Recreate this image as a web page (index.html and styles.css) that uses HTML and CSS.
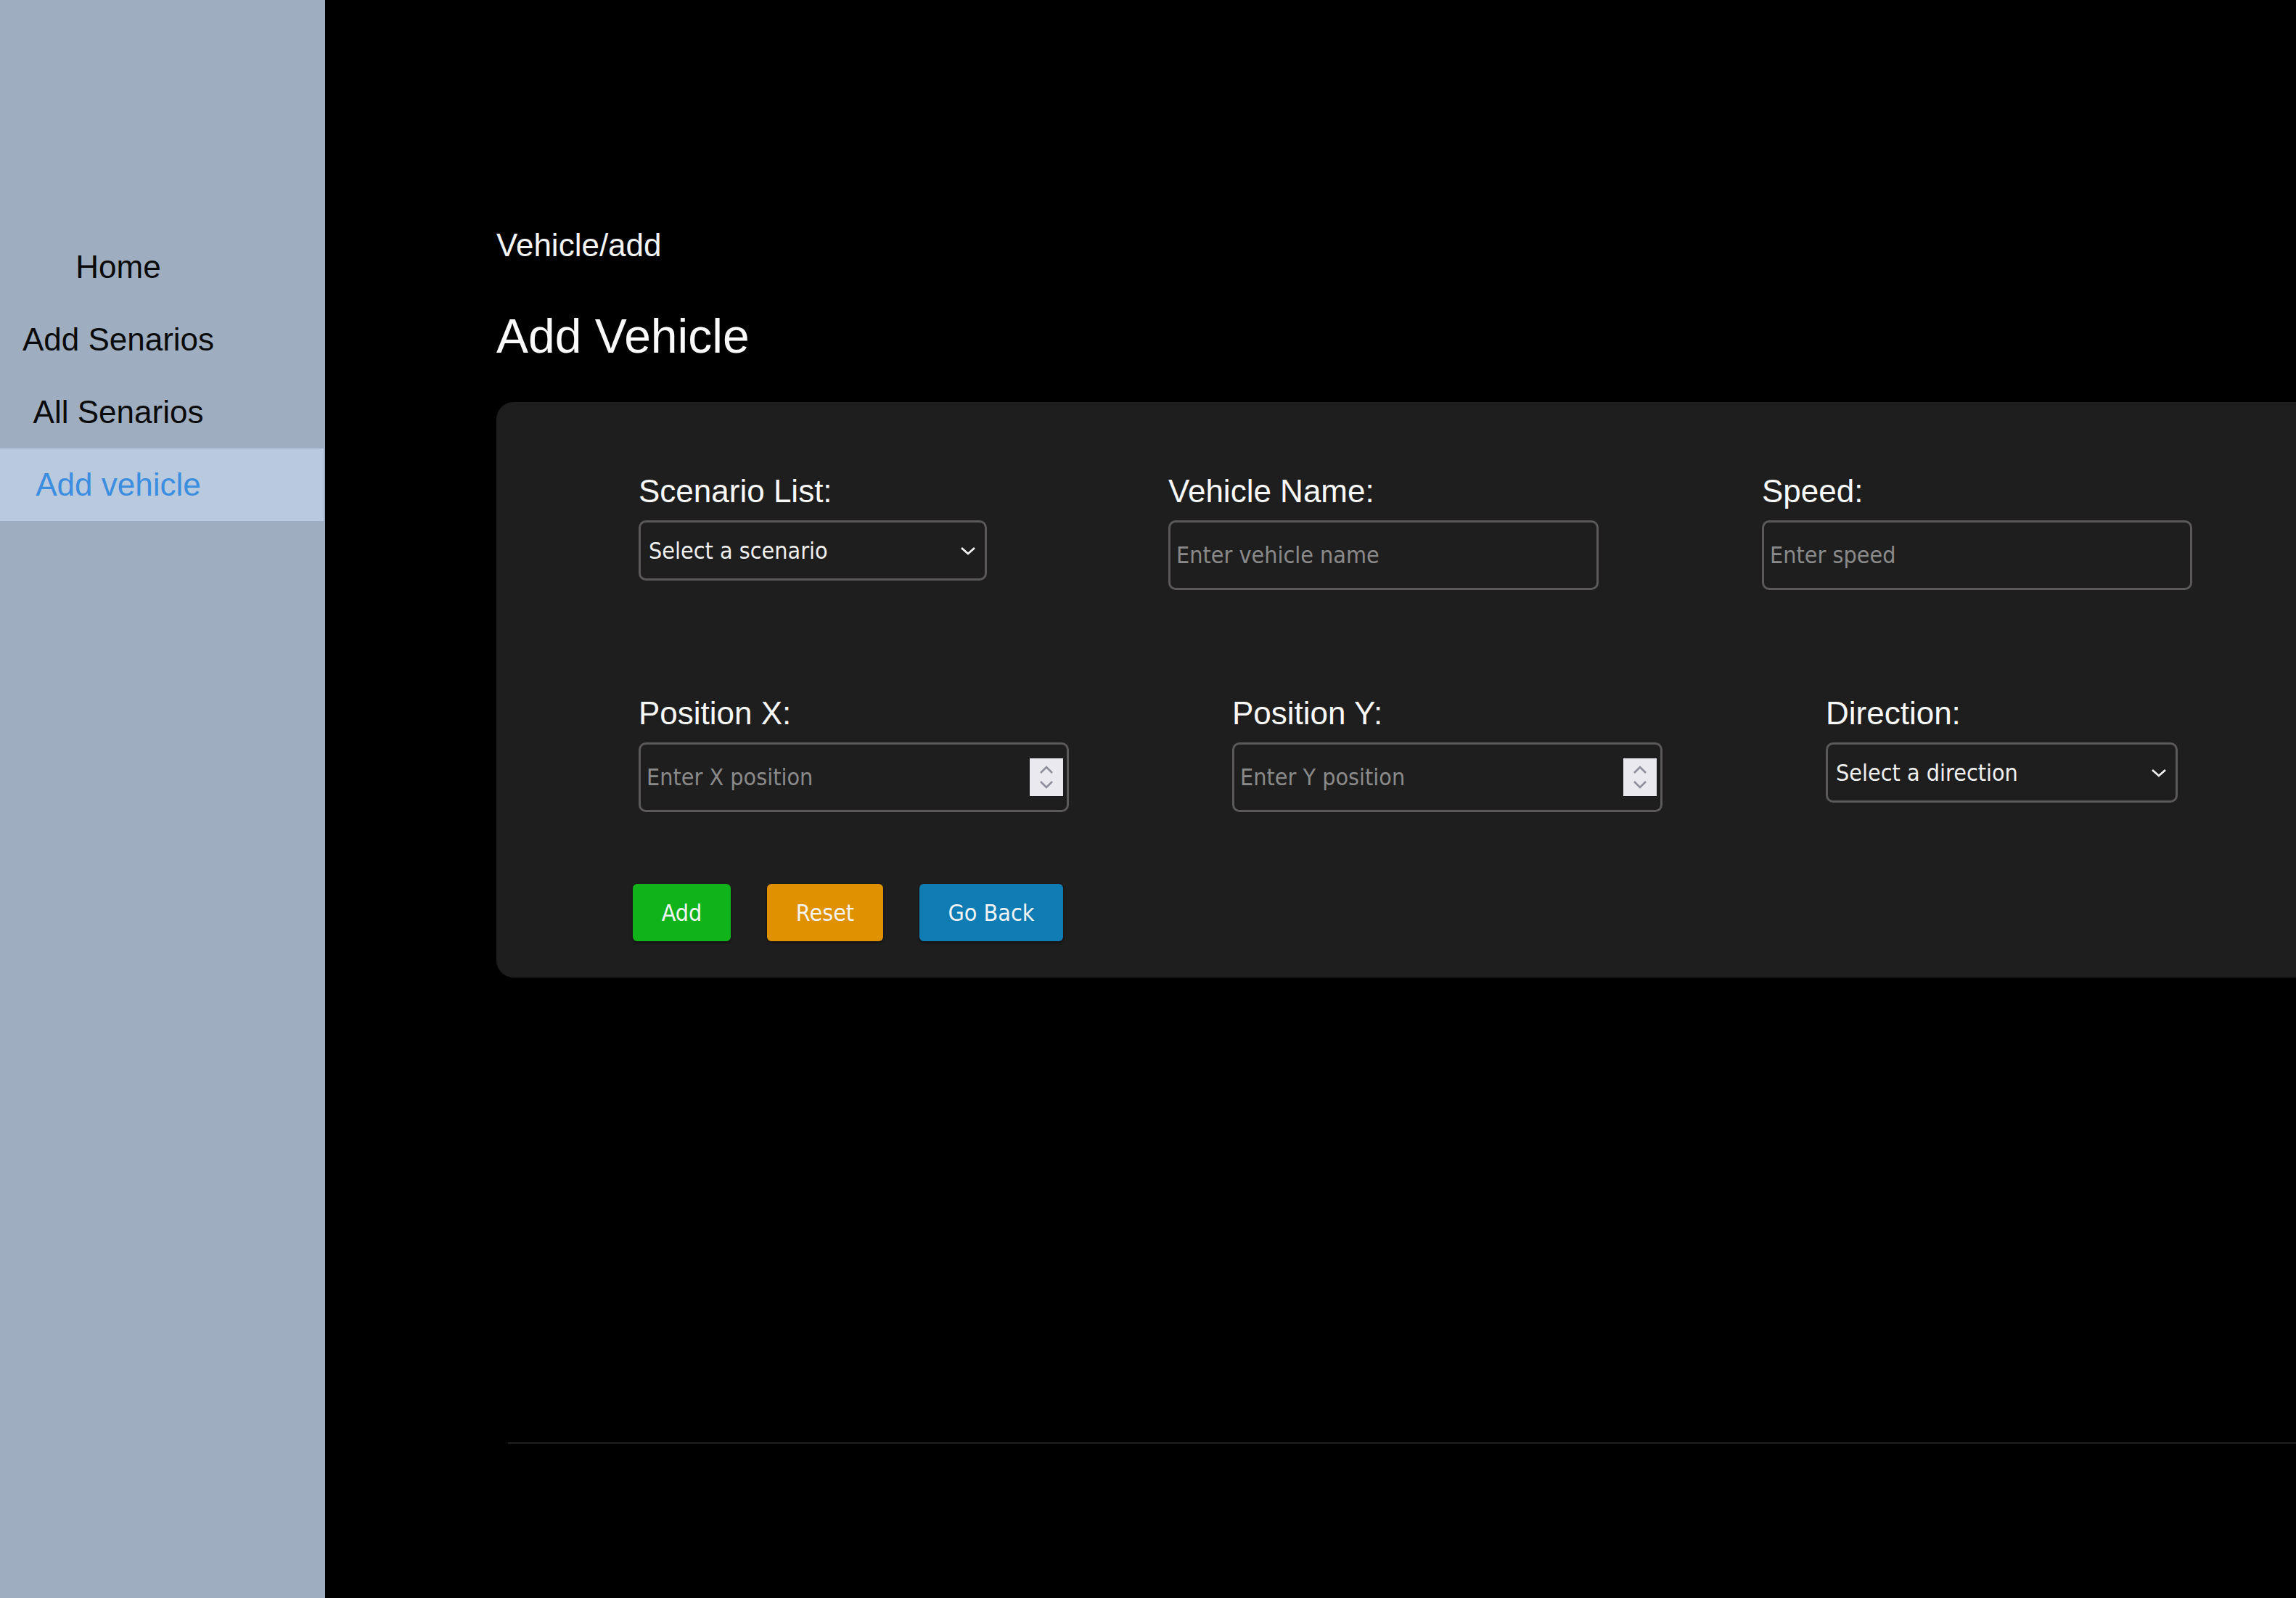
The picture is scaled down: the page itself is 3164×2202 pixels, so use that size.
FILE: index.html
```html
<!DOCTYPE html>
<html lang="en">
<head>
<meta charset="utf-8">
<title>Add Vehicle</title>
<link rel="stylesheet" href="styles.css">
</head>
<body>
<div class="layout">
  <aside class="sidebar">
    <nav class="nav">
      <a class="nav-item">Home</a>
      <a class="nav-item">Add Senarios</a>
      <a class="nav-item">All Senarios</a>
      <a class="nav-item active">Add vehicle</a>
    </nav>
  </aside>
  <main class="main">
    <div class="breadcrumb">Vehicle/add</div>
    <h1 class="title">Add Vehicle</h1>
    <section class="card">
      <div class="row row-top">
        <div class="field field-scenario">
          <label class="label">Scenario List:</label>
          <div class="select-wrap select-scenario">
            <select class="select"><option>Select a scenario</option></select>
            <svg class="chevron" viewBox="0 0 24 14" width="24" height="14"><path d="M3 3 L12 11 L21 3" fill="none" stroke="#f0f0f0" stroke-width="2.8"/></svg>
          </div>
        </div>
        <div class="field">
          <label class="label">Vehicle Name:</label>
          <input class="input" type="text" placeholder="Enter vehicle name">
        </div>
        <div class="field">
          <label class="label">Speed:</label>
          <input class="input" type="text" placeholder="Enter speed">
        </div>
      </div>
      <div class="row row-bottom">
        <div class="field">
          <label class="label">Position X:</label>
          <div class="number-wrap">
            <input class="input" type="number" placeholder="Enter X position">
            <span class="spinner"><svg viewBox="0 0 46 52" width="46" height="52"><path d="M15 20 L23 12 L31 20" fill="none" stroke="#8d8d9c" stroke-width="2.6"/><path d="M15 32 L23 40 L31 32" fill="none" stroke="#8d8d9c" stroke-width="2.6"/></svg></span>
          </div>
        </div>
        <div class="field">
          <label class="label">Position Y:</label>
          <div class="number-wrap">
            <input class="input" type="number" placeholder="Enter Y position">
            <span class="spinner"><svg viewBox="0 0 46 52" width="46" height="52"><path d="M15 20 L23 12 L31 20" fill="none" stroke="#8d8d9c" stroke-width="2.6"/><path d="M15 32 L23 40 L31 32" fill="none" stroke="#8d8d9c" stroke-width="2.6"/></svg></span>
          </div>
        </div>
        <div class="field">
          <label class="label">Direction:</label>
          <div class="select-wrap select-direction">
            <select class="select"><option>Select a direction</option></select>
            <svg class="chevron" viewBox="0 0 24 14" width="24" height="14"><path d="M3 3 L12 11 L21 3" fill="none" stroke="#f0f0f0" stroke-width="2.8"/></svg>
          </div>
        </div>
      </div>
      <div class="actions">
        <button class="btn btn-add" type="button">Add</button>
        <button class="btn btn-reset" type="button">Reset</button>
        <button class="btn btn-back" type="button">Go Back</button>
      </div>
    </section>
    <div class="footer-line"></div>
  </main>
</div>
</body>
</html>
```
FILE: styles.css
```css
* { box-sizing: border-box; }

html, body {
  margin: 0;
  padding: 0;
  width: 3164px;
  height: 2202px;
  overflow: hidden;
  background: #000;
  font-family: "Liberation Sans", Arial, sans-serif;
}

.layout {
  display: flex;
  width: 3164px;
  height: 2202px;
}

.sidebar {
  width: 448px;
  flex: 0 0 448px;
  height: 100%;
  background: #9eaec0;
  padding-top: 318px;
}

.nav {
  display: flex;
  flex-direction: column;
}

.nav-item {
  display: block;
  height: 100px;
  line-height: 100px;
  padding-right: 120px;
  text-align: center;
  font-size: 44px;
  color: #0a0a0a;
  margin-right: 2px;
}

.nav-item.active {
  background: #b9c9de;
  color: #3b8de0;
}

.main {
  flex: 1;
  min-width: 0;
  padding-left: 236px;
  padding-top: 312px;
  overflow: hidden;
}

.breadcrumb {
  font-size: 44px;
  line-height: 52px;
  color: #f4f4f4;
}

.title {
  margin: 61px 0 0 0;
  font-size: 66px;
  font-weight: normal;
  line-height: 76px;
  color: #fafafa;
}

.card {
  margin-top: 53px;
  width: 2700px;
  height: 793px;
  background: #1f1e1f;
  border-radius: 24px;
  padding: 98px 0 0 196px;
}

.row {
  display: flex;
  align-items: flex-start;
  gap: 225px;
}

.row-bottom {
  margin-top: 145px;
}

.field {
  display: flex;
  flex-direction: column;
  width: 593px;
}

.field-scenario {
  width: 505px;
}

.label {
  font-size: 44px;
  line-height: 50px;
  color: #f8f8f8;
  margin-bottom: 15px;
}

.input,
.select {
  font-family: "DejaVu Sans Condensed", "DejaVu Sans", sans-serif;
  font-stretch: condensed;
  font-size: 32px;
  background: transparent;
  border: 3px solid #5b5959;
  border-radius: 10px;
  outline: none;
  margin: 0;
}

.input {
  width: 593px;
  height: 96px;
  padding: 0 8px;
  color: #e6e6e6;
}

.input::placeholder {
  color: #8a8a8a;
}

.input[type=number] {
  -moz-appearance: textfield;
  appearance: textfield;
}

.input[type=number]::-webkit-inner-spin-button,
.input[type=number]::-webkit-outer-spin-button {
  -webkit-appearance: none;
  margin: 0;
}

.number-wrap {
  position: relative;
  width: 593px;
}

.spinner {
  position: absolute;
  right: 8px;
  top: 22px;
  width: 46px;
  height: 52px;
  background: #e9e9ef;
  display: block;
}

.spinner svg {
  display: block;
}

.select-wrap {
  position: relative;
}

.select-scenario { width: 480px; }
.select-direction { width: 485px; }

.select {
  -webkit-appearance: none;
  appearance: none;
  width: 100%;
  height: 83px;
  padding: 0 40px 0 11px;
  color: #f0f0f0;
}

.chevron {
  position: absolute;
  right: 14px;
  top: 35px;
  pointer-events: none;
}

.actions {
  display: flex;
  gap: 50px;
  margin-top: 99px;
  margin-left: -8px;
}

.btn {
  height: 79px;
  padding: 0;
  border: none;
  border-radius: 6px;
  font-family: "DejaVu Sans Condensed", "DejaVu Sans", sans-serif;
  font-stretch: condensed;
  font-size: 32px;
  color: #f4f4f4;
  box-shadow: 0 2px 3px rgba(0,0,0,0.5);
}

.btn-add { background: #10b31a; width: 135px; }
.btn-reset { background: #e09100; width: 160px; }
.btn-back { background: #0f7cb3; width: 198px; }

.footer-line {
  margin-top: 640px;
  margin-left: 16px;
  height: 3px;
  background: #1a1a1a;
}
```
